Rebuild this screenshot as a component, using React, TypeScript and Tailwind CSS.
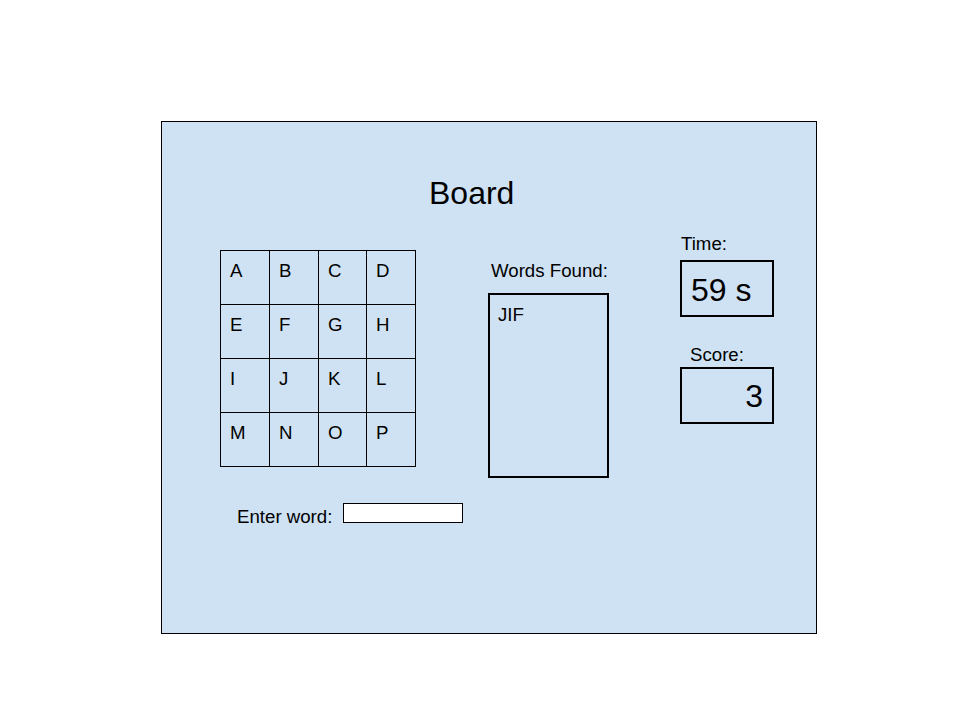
import React from 'react';

const letters = ['A', 'B', 'C', 'D', 'E', 'F', 'G', 'H', 'I', 'J', 'K', 'L', 'M', 'N', 'O', 'P'];

const LetterGrid = () => (
  <div className="grid grid-cols-[49px_49px_48px_49px] grid-rows-[54px_54px_54px_54px] border-t border-l border-black w-[196px]">
    {letters.map((l) => (
      <div key={l} className="border-r border-b border-black pl-[9px] pt-[9px] text-[18.67px] leading-[21px]">
        {l}
      </div>
    ))}
  </div>
);

const App = () => {
  return (
    <div className="w-[960px] h-[720px] bg-white pt-[121px] pl-[161px] text-black font-['Liberation_Sans',Arial,sans-serif]">
      <div className="w-[656px] h-[513px] border border-black bg-[#cfe2f3] flex flex-col">
        <div className="mt-[53px] pl-[267px] text-[32px] leading-[37px]">Board</div>

        <div className="flex items-start mt-[21px] pl-[58px]">
          <div className="flex flex-col shrink-0 w-[196px] mt-[17px]">
            <LetterGrid />
            <div className="flex items-start w-max mt-[36px] whitespace-nowrap">
              <div className="ml-[17px] pt-[3px] text-[18.67px] leading-[21px]">Enter word:</div>
              <input
                type="text"
                className="ml-[11px] w-[120px] h-[20px] border border-black bg-white outline-none"
              />
            </div>
          </div>

          <div className="flex flex-col shrink-0 ml-[72px] mt-[27px]">
            <div className="pl-[3px] text-[18.67px] leading-[21px] whitespace-nowrap">Words Found:</div>
            <div className="mt-[12px] w-[121px] h-[185px] border-2 border-black pl-[8px] pt-[9px] text-[18.67px] leading-[21px]">
              JIF
            </div>
          </div>

          <div className="flex flex-col shrink-0 ml-[71px]">
            <div className="pl-[1px] text-[18.67px] leading-[21px]">Time:</div>
            <div className="mt-[6px] w-[94px] h-[57px] border-2 border-black pl-[9px] pt-[10px] text-[32px] leading-[37px]">
              59 s
            </div>
            <div className="mt-[27px] pl-[10px] text-[18.67px] leading-[21px]">Score:</div>
            <div className="mt-[2px] w-[94px] h-[57px] border-2 border-black pr-[9px] pt-[9px] text-right text-[32px] leading-[37px]">
              3
            </div>
          </div>
        </div>
      </div>
    </div>
  );
};

export default App;
